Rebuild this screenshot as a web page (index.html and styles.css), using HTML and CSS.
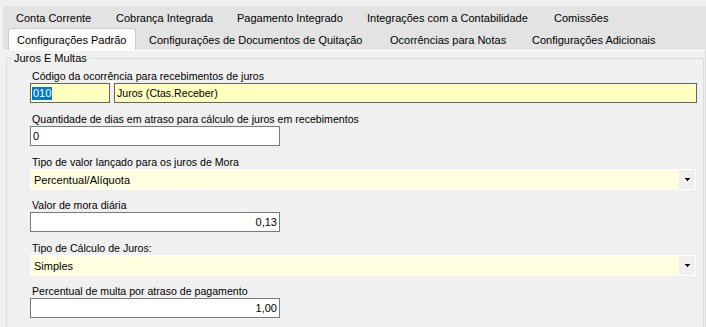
FILE: index.html
```html
<!DOCTYPE html>
<html lang="pt-BR">
<head>
  <meta charset="UTF-8" />
  <title>Configurações Padrão</title>
  <link rel="stylesheet" href="styles.css">
</head>
<body>

  <div class="tabs">
    <div class="tab-row">
      <span class="tab" style="width: 100px">Conta Corrente</span>
      <span class="tab" style="width: 121px">Cobrança Integrada</span>
      <span class="tab" style="width: 130px">Pagamento Integrado</span>
      <span class="tab" style="width: 187px">Integrações com a Contabilidade</span>
      <span class="tab" style="width: 81px">Comissões</span>
    </div>
    <div class="tab-row second">
      <span class="tab active">Configurações Padrão</span>
      <span class="tab" style="width: 241px">Configurações de Documentos de Quitação</span>
      <span class="tab" style="width: 142px">Ocorrências para Notas</span>
      <span class="tab" style="width: 152px">Configurações Adicionais</span>
    </div>
  </div>

  <div class="panel">
    <fieldset class="group">
      <legend>Juros E Multas</legend>

      <div class="field first">
        <label>Código da ocorrência para recebimentos de juros</label>
        <div class="pair">
          <div class="input yellow code"><span class="selected">010</span></div>
          <div class="input yellow wide">Juros (Ctas.Receber)</div>
        </div>
      </div>

      <div class="field">
        <label>Quantidade de dias em atraso para cálculo de juros em recebimentos</label>
        <div class="input short">0</div>
      </div>

      <div class="field">
        <label>Tipo de valor lançado para os juros de Mora</label>
        <div class="combo">
          <span class="combo-text">Percentual/Alíquota</span>
          <span class="combo-btn">
            <svg width="5" height="3" viewBox="0 0 5 3"><path d="M0 0h5v1H4v1H3v1H2V2H1V1H0z" fill="#000"/></svg>
          </span>
        </div>
      </div>

      <div class="field after-combo">
        <label>Valor de mora diária</label>
        <div class="input short number">0,13</div>
      </div>

      <div class="field">
        <label>Tipo de Cálculo de Juros:</label>
        <div class="combo">
          <span class="combo-text">Simples</span>
          <span class="combo-btn">
            <svg width="5" height="3" viewBox="0 0 5 3"><path d="M0 0h5v1H4v1H3v1H2V2H1V1H0z" fill="#000"/></svg>
          </span>
        </div>
      </div>

      <div class="field after-combo">
        <label>Percentual de multa por atraso de pagamento</label>
        <div class="input short number">1,00</div>
      </div>
    </fieldset>
  </div>

</body>
</html>
```

FILE: styles.css
```css
* {
  margin: 0;
  box-sizing: border-box;
}

body {
  font-family: 'Liberation Sans', Arial, sans-serif;
  font-size: 11px;
  background-color: #f0f0f0;
  color: #000;
  height: 327px;
  overflow: hidden;
}

.tabs {
  margin: 6px 0 0 3px;
  background: #e3e3e3;
  height: 44px;
}

.tab-row {
  display: flex;
  height: 22px;
  align-items: center;
  padding-top: 2px;
}

.tab {
  padding-left: 13px;
  white-space: nowrap;
  line-height: 14px;
}

.tab-row.second {
  align-items: flex-end;
  padding-top: 0;
}

.second .tab {
  height: 21px;
  padding-top: 4px;
}

.tab.active {
  width: 128px;
  height: 22px;
  margin-left: 5px;
  padding: 4px 0 0 8px;
  background: #fcfcfc;
  border: 1px solid #cdcdcd;
  border-bottom: none;
  border-radius: 3px 3px 0 0;
}

.panel {
  margin-left: 3px;
  height: 277px;
  border-top: 1px solid #fff;
  border-right: 1px solid #dadada;
  padding: 1px 2px 0 3px;
}

.group {
  border: 1px solid #dcdcdc;
  padding: 0 6px 0 23px;
  height: 290px;
}

.group legend {
  padding: 0 2px;
  margin-left: -18px;
  line-height: 13px;
}

.field {
  margin-top: 9px;
}

.field.first {
  margin-top: 4px;
}

.field.after-combo {
  margin-top: 8px;
}

.field label {
  display: block;
  font-size: 10.6px;
  line-height: 14px;
  padding-left: 2px;
  white-space: nowrap;
}

.pair {
  display: flex;
  gap: 4px;
}

.input {
  height: 20px;
  border: 1px solid #7a7a7a;
  background: #fff;
  padding: 2px 0 0 2px;
  line-height: 14px;
  white-space: nowrap;
}

.input.yellow {
  background: #ffffc0;
  border-color: #646464;
}

.input.code {
  width: 80px;
  padding-left: 1px;
}

.input.wide {
  width: 583px;
  font-size: 10.6px;
}

.input.short {
  width: 250px;
}

.input.number {
  text-align: right;
  padding: 2px 2px 0 0;
}

.selected {
  display: inline-block;
  background: #0078d7;
  color: #fff;
  padding: 0 1px;
  line-height: 13px;
}

.combo {
  display: flex;
  width: 666px;
  height: 21px;
  border: 1px solid #fff;
  background: #ffffe0;
}

.combo-text {
  flex: 1;
  padding: 3px 0 0 3px;
  line-height: 14px;
}

.combo-btn {
  width: 16px;
  background: #f0f0f0;
  display: flex;
  align-items: center;
  justify-content: center;
  padding-left: 1px;
}
```
